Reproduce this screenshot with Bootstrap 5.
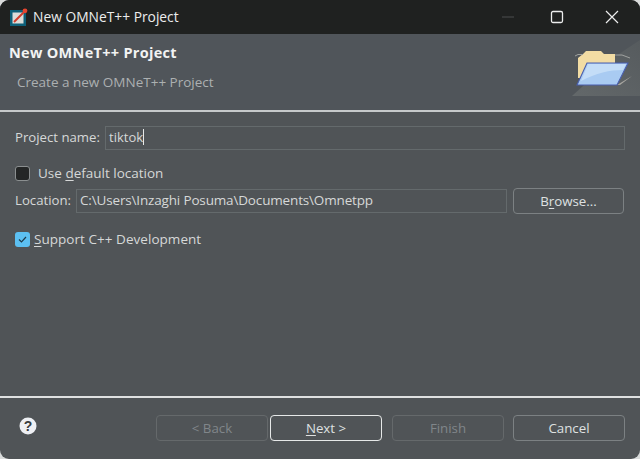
<!DOCTYPE html>
<html lang="en">
<head>
<meta charset="utf-8">
<title>New OMNeT++ Project</title>
<link href="https://cdn.jsdelivr.net/npm/bootstrap@5.3.0/dist/css/bootstrap.min.css" rel="stylesheet">
<style>
html,body{margin:0;height:459px;overflow:hidden;background:#d9dbdb;}
body{font-family:"Open Sans","Noto Sans",sans-serif;font-size:13.5px;color:#d6d8d8;}
.dlg{width:640px;height:459px;background:#505457;border-radius:9px;overflow:hidden;}
.tbar{height:34px;background:#1f2120;color:#eceded;padding-left:10px;font-size:13.8px;}
.tbar-title{margin-left:5px;}
.wb{width:46px;height:34px;}
.wb-min{margin-right:3px;}
.wb-max{margin-right:9px;}
.wb-close{margin-right:5px;}
.hdr{height:76px;background:#50555a;}
.hdr-text{padding:9px 0 0 9px;}
.hdr-title{font-weight:700;font-size:14.5px;color:#f2f3f3;line-height:20px;letter-spacing:.3px;}
.hdr-sub{margin:9px 0 0 8px;font-size:13.5px;color:#acb0b1;line-height:20px;}
.hdr-art{width:70px;height:72px;margin-top:4px;}
.sep-top{height:2px;background:#c6c9ca;}
.body-area{height:284px;padding:14px 15px 0 15px;}
.field{background:transparent;border:1px solid #646a6c;height:24px;padding:0 3px;color:#d6d8d8;font-size:13.5px;line-height:20px;}
.name-row{height:24px;margin-bottom:12px;}
.name-lbl{width:90px;font-size:13.2px;}
.name-f{flex:1;font-size:13px;}
.caret-bar{border-left:1px solid #e6e8e8;height:16px;display:inline-block;vertical-align:-3px;}
.cb{width:15px;height:15px;border-radius:3px;flex:none;}
.cb-off{background:#242626;border:1px solid #8b8f90;}
.cb-on{background:#5cc0f2;}
.def-row{height:22px;margin-bottom:4px;}
.def-lbl{margin-left:8px;}
.loc-row{height:26px;margin-bottom:14px;}
.loc-lbl{width:61px;font-size:13.2px;}
.loc-f{width:431px;letter-spacing:-.16px;}
.sup-row{height:22px;}
.sup-lbl{margin-left:4px;letter-spacing:.04px;}
.u{text-decoration:underline;text-underline-offset:2px;text-decoration-thickness:1px;}
.sep-bot{height:2px;background:#dfe1e1;}
.foot{height:61px;padding:17px 15px 0 19px;}
.wbtn{width:112px;height:26px;padding:0;border:1px solid #7c8183;border-radius:4px;background:transparent;color:#dfe1e1;font-size:13.3px;line-height:22px;}
.wbtn:disabled{border-color:#65696b;color:#80868a;opacity:1;background:transparent;}
.wbtn-def{border:1.5px solid #e6e8e8;}
.gap-a{margin-left:2px;}
.gap-b{margin-left:10px;}
.gap-c{margin-left:9px;}
.browse{margin-left:6px;width:111px;}
.help{width:18px;height:18px;margin-top:2px;}
</style>
</head>
<body>
<div class="dlg d-flex flex-column">
  <div class="tbar d-flex align-items-center">
    <svg width="18" height="18" viewBox="0 0 18 18">
      <rect x="0" y="2" width="16" height="16" fill="#0d5f78"/>
      <rect x="2.5" y="4.5" width="11" height="11" fill="#dcdcd8"/>
      <path d="M4 14 L14 4" stroke="#d23a2a" stroke-width="2"/>
      <circle cx="15" cy="2.8" r="2.4" fill="#e4452f"/>
    </svg>
    <span class="tbar-title">New OMNeT++ Project</span>
    <div class="ms-auto d-flex">
      <div class="wb wb-min d-flex align-items-center justify-content-center"><svg width="14" height="14" viewBox="0 0 14 14"><path d="M1 7H13" stroke="#4c4f4e" stroke-width="1"/></svg></div>
      <div class="wb wb-max d-flex align-items-center justify-content-center"><svg width="14" height="14" viewBox="0 0 14 14"><rect x="1.5" y="1.5" width="11" height="11" rx="1.5" fill="none" stroke="#eceded" stroke-width="1.3"/></svg></div>
      <div class="wb wb-close d-flex align-items-center justify-content-center"><svg width="14" height="14" viewBox="0 0 14 14"><path d="M1 1L13 13M13 1L1 13" stroke="#eceded" stroke-width="1.2"/></svg></div>
    </div>
  </div>
  <div class="hdr d-flex justify-content-between">
    <div class="hdr-text">
      <div class="hdr-title">New OMNeT++ Project</div>
      <div class="hdr-sub">Create a new OMNeT++ Project</div>
    </div>
    <svg class="hdr-art" viewBox="0 0 70 72">
      <defs>
        <linearGradient id="bd" x1="0" y1="1" x2="1" y2="0">
          <stop offset="0" stop-color="#63686a"/>
          <stop offset="1" stop-color="#565b5e"/>
        </linearGradient>
      </defs>
      <path d="M2 58 H70 V2 L46 18 Z" fill="url(#bd)"/>
      <path d="M47 47 L62 38 L50 47 Z" fill="#a8a6a0"/>
      <path d="M8 20 L13 16 L16 13 H31 L34 16 H45 V40 H8 Z" fill="#f2dca4"/>
      <path d="M5 18 L8 16.500 H13 M45 17 H52 M52 17 L60 20" fill="none" stroke="#9fa19f" stroke-width="1"/>
      <path d="M17 25 H58 L47 47 H7 Z" fill="#a9cbf2" stroke="#4a5fae" stroke-width="1.1"/>
      <path d="M18 26 H56 L53 32 C40 32 26 35 11 43 Z" fill="#c4ddf7"/>
    </svg>
  </div>
  <div class="sep-top"></div>
  <div class="body-area">
    <div class="name-row d-flex align-items-center">
      <div class="name-lbl">Project name:</div>
      <div class="field name-f">tiktok<span class="caret-bar"></span></div>
    </div>
    <div class="def-row d-flex align-items-center">
      <span class="cb cb-off"></span>
      <span class="def-lbl">Use <span class="u">d</span>efault location</span>
    </div>
    <div class="loc-row d-flex align-items-center">
      <div class="loc-lbl">Location:</div>
      <div class="field loc-f">C:\Users\Inzaghi Posuma\Documents\Omnetpp</div>
      <button type="button" class="btn wbtn browse">B<span class="u">r</span>owse...</button>
    </div>
    <div class="sup-row d-flex align-items-center">
      <span class="cb cb-on d-flex align-items-center justify-content-center"><svg width="11" height="11" viewBox="0 0 11 11"><path d="M2 5.500L4.500 8L9 3" fill="none" stroke="#1e3a4a" stroke-width="1.2"/></svg></span>
      <span class="sup-lbl"><span class="u">S</span>upport C++ Development</span>
    </div>
  </div>
  <div class="sep-bot"></div>
  <div class="foot d-flex align-items-start">
    <svg class="help" viewBox="0 0 18 18">
      <circle cx="9" cy="9" r="8.500" fill="#eef0f4"/>
      <text x="9" y="14" text-anchor="middle" font-family="Liberation Sans, sans-serif" font-weight="700" font-size="14" fill="#3a3d40">?</text>
    </svg>
    <div class="ms-auto d-flex">
      <button type="button" class="btn wbtn" disabled>&lt; Back</button>
      <button type="button" class="btn wbtn wbtn-def gap-a"><span class="u">N</span>ext &gt;</button>
      <button type="button" class="btn wbtn gap-b" disabled>Finish</button>
      <button type="button" class="btn wbtn gap-c">Cancel</button>
    </div>
  </div>
</div>
<script src="https://cdn.jsdelivr.net/npm/bootstrap@5.3.0/dist/js/bootstrap.bundle.min.js"></script>
</body>
</html>
